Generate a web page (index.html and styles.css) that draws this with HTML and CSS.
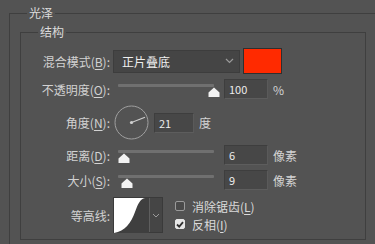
FILE: index.html
```html
<!DOCTYPE html>
<html lang="zh">
<head>
<meta charset="utf-8">
<title>光泽</title>
<link rel="stylesheet" href="styles.css">
</head>
<body>
<fieldset class="group outer">
  <legend class="legend">光泽</legend>
  <fieldset class="group inner">
    <legend class="legend">结构</legend>

    <div class="row row-blend">
      <span class="label">混合模式(<u>B</u>):</span>
      <div class="select">
        <span class="select-text">正片叠底</span>
        <svg class="chev" width="9" height="6" viewBox="0 0 9 6"><path d="M1 1 L4.5 4.5 L8 1" fill="none" stroke="#9a9a9a" stroke-width="1.2"/></svg>
      </div>
      <div class="swatch"></div>
    </div>

    <div class="row row-slider">
      <span class="label">不透明度(<u>O</u>):</span>
      <div class="slider">
        <div class="track"></div>
        <svg class="thumb" style="left:95px" width="12" height="10" viewBox="0 0 12 10"><path d="M6 0.5 L11.5 5.5 L11.5 10 L0.5 10 L0.5 5.5 Z" fill="#f2f2f2"/></svg>
      </div>
      <div class="field">100</div>
      <span class="unit">%</span>
    </div>

    <div class="row row-angle">
      <span class="label">角度(<u>N</u>):</span>
      <svg class="dial" width="35" height="35" viewBox="0 0 35 35">
        <circle cx="17.5" cy="17.5" r="16.5" fill="none" stroke="#a0a0a0" stroke-width="1"/>
        <line x1="17.5" y1="17.5" x2="31" y2="12.3" stroke="#cfcfcf" stroke-width="1.1"/>
        <circle cx="17.5" cy="17.5" r="1.6" fill="#d0d0d0"/>
      </svg>
      <div class="field field-angle">21</div>
      <span class="unit">度</span>
    </div>

    <div class="row row-slider">
      <span class="label">距离(<u>D</u>):</span>
      <div class="slider">
        <div class="track"></div>
        <svg class="thumb" style="left:5px" width="12" height="10" viewBox="0 0 12 10"><path d="M6 0.5 L11.5 5.5 L11.5 10 L0.5 10 L0.5 5.5 Z" fill="#f2f2f2"/></svg>
      </div>
      <div class="field">6</div>
      <span class="unit">像素</span>
    </div>

    <div class="row row-slider">
      <span class="label">大小(<u>S</u>):</span>
      <div class="slider">
        <div class="track"></div>
        <svg class="thumb" style="left:8px" width="12" height="10" viewBox="0 0 12 10"><path d="M6 0.5 L11.5 5.5 L11.5 10 L0.5 10 L0.5 5.5 Z" fill="#f2f2f2"/></svg>
      </div>
      <div class="field">9</div>
      <span class="unit">像素</span>
    </div>

    <div class="row row-contour">
      <span class="label">等高线:</span>
      <div class="contour">
        <svg class="curve" width="35" height="35" viewBox="0 0 35 35">
          <rect width="35" height="35" fill="#3f3f3f"/>
          <path d="M0 0 H31 C26 1 24 6 21 14 C17 25 11 33 0 35 Z" fill="#ffffff"/>
        </svg>
        <div class="contour-drop">
          <svg width="8" height="5" viewBox="0 0 8 5"><path d="M1 1 L4 4 L7 1" fill="none" stroke="#9a9a9a" stroke-width="1"/></svg>
        </div>
      </div>
      <div class="checks">
        <label class="check"><span class="box"></span><span>消除锯齿(<u>L</u>)</span></label>
        <label class="check"><span class="box on"><svg width="8" height="7" viewBox="0 0 8 7"><path d="M1 3.5 L3.2 5.6 L7 1.2" fill="none" stroke="#303030" stroke-width="1.8"/></svg></span><span>反相(<u>I</u>)</span></label>
      </div>
    </div>
  </fieldset>
</fieldset>
</body>
</html>
```

FILE: styles.css
```css
html, body {
  margin: 0;
  padding: 0;
  background: #535353;
  overflow: hidden;
  width: 375px;
  height: 244px;
}
body {
  padding-top: 4px;
  box-sizing: border-box;
  font-family: "Noto Sans CJK SC", "Noto Sans", sans-serif;
  font-size: 12px;
  color: #d4d4d4;
}
u {
  text-decoration: underline;
  text-underline-offset: 2px;
}
.group {
  border: 1px solid #3f3f3f;
  margin: 0;
  padding: 0;
  min-width: 0;
}
.legend {
  line-height: 18px;
  height: 18px;
  padding: 0 2px;
  margin-left: 17px;
  font-size: 12px;
  color: #dcdcdc;
}
.outer {
  margin-left: 9px;
  width: 366px;
  height: 240px;
  box-sizing: border-box;
  padding-top: 1px;
  border-right: none;
  border-bottom: none;
}
.inner {
  margin-left: 10px;
  width: 346px;
  box-sizing: border-box;
  padding: 7px 0 6px 0;
}
.row {
  display: flex;
  align-items: center;
  margin-top: 5px;
}
.row-blend { margin-top: 0; height: 26px; }
.row-angle { margin-top: 6px; }
.row-contour { margin-top: 7px; }
.label {
  width: 89px;
  margin-right: 3px;
  text-align: right;
  white-space: nowrap;
  color: #d2d2d2;
}
.select {
  width: 127px;
  height: 23px;
  box-sizing: border-box;
  background: #454545;
  border: 1px solid #3d3d3d;
  display: flex;
  align-items: center;
  justify-content: space-between;
  padding: 0 5px 0 8px;
  color: #efefef;
}
.select-text { font-size: 12px; }
.swatch {
  width: 39px;
  height: 26px;
  box-sizing: border-box;
  margin-left: 3px;
  background: #ff2a00;
  border: 1px solid #2f2f2f;
  align-self: flex-start;
}
.slider {
  position: relative;
  width: 106px;
  height: 20px;
}
.track {
  position: absolute;
  left: 5px;
  right: 5px;
  top: 5px;
  height: 3px;
  background: #707070;
  border-radius: 1px;
}
.thumb {
  position: absolute;
  top: 8px;
}
.field {
  width: 44px;
  height: 20px;
  box-sizing: border-box;
  margin-left: 5px;
  background: #474747;
  border: 1px solid #3e3e3e;
  border-bottom-color: #5d5d5d;
  border-right-color: #5a5a5a;
  padding-left: 4px;
  font-size: 11px;
  line-height: 18px;
  color: #ececec;
}
.field-angle { width: 40px; }
.unit {
  margin-left: 5px;
  color: #d4d4d4;
}
.dial {
  margin-left: 1px;
  display: block;
}
.contour {
  display: flex;
  height: 36px;
  box-sizing: border-box;
  border: 1px solid #3a3a3a;
  background: #454545;
}
.curve { display: block; }
.contour-drop {
  width: 12px;
  border-left: 1px solid #5e5e5e;
  display: flex;
  align-items: center;
  justify-content: center;
}
.checks {
  display: flex;
  flex-direction: column;
  margin-left: 12px;
  align-self: flex-start;
}
.check {
  display: flex;
  align-items: center;
  height: 18px;
  color: #dadada;
}
.box {
  width: 10px;
  height: 10px;
  box-sizing: border-box;
  border: 1px solid #9a9a9a;
  border-radius: 2px;
  background: #4a4a4a;
  margin-right: 7px;
  display: flex;
  align-items: center;
  justify-content: center;
}
.box.on {
  background: #e6e6e6;
  border-color: #e6e6e6;
}
```
